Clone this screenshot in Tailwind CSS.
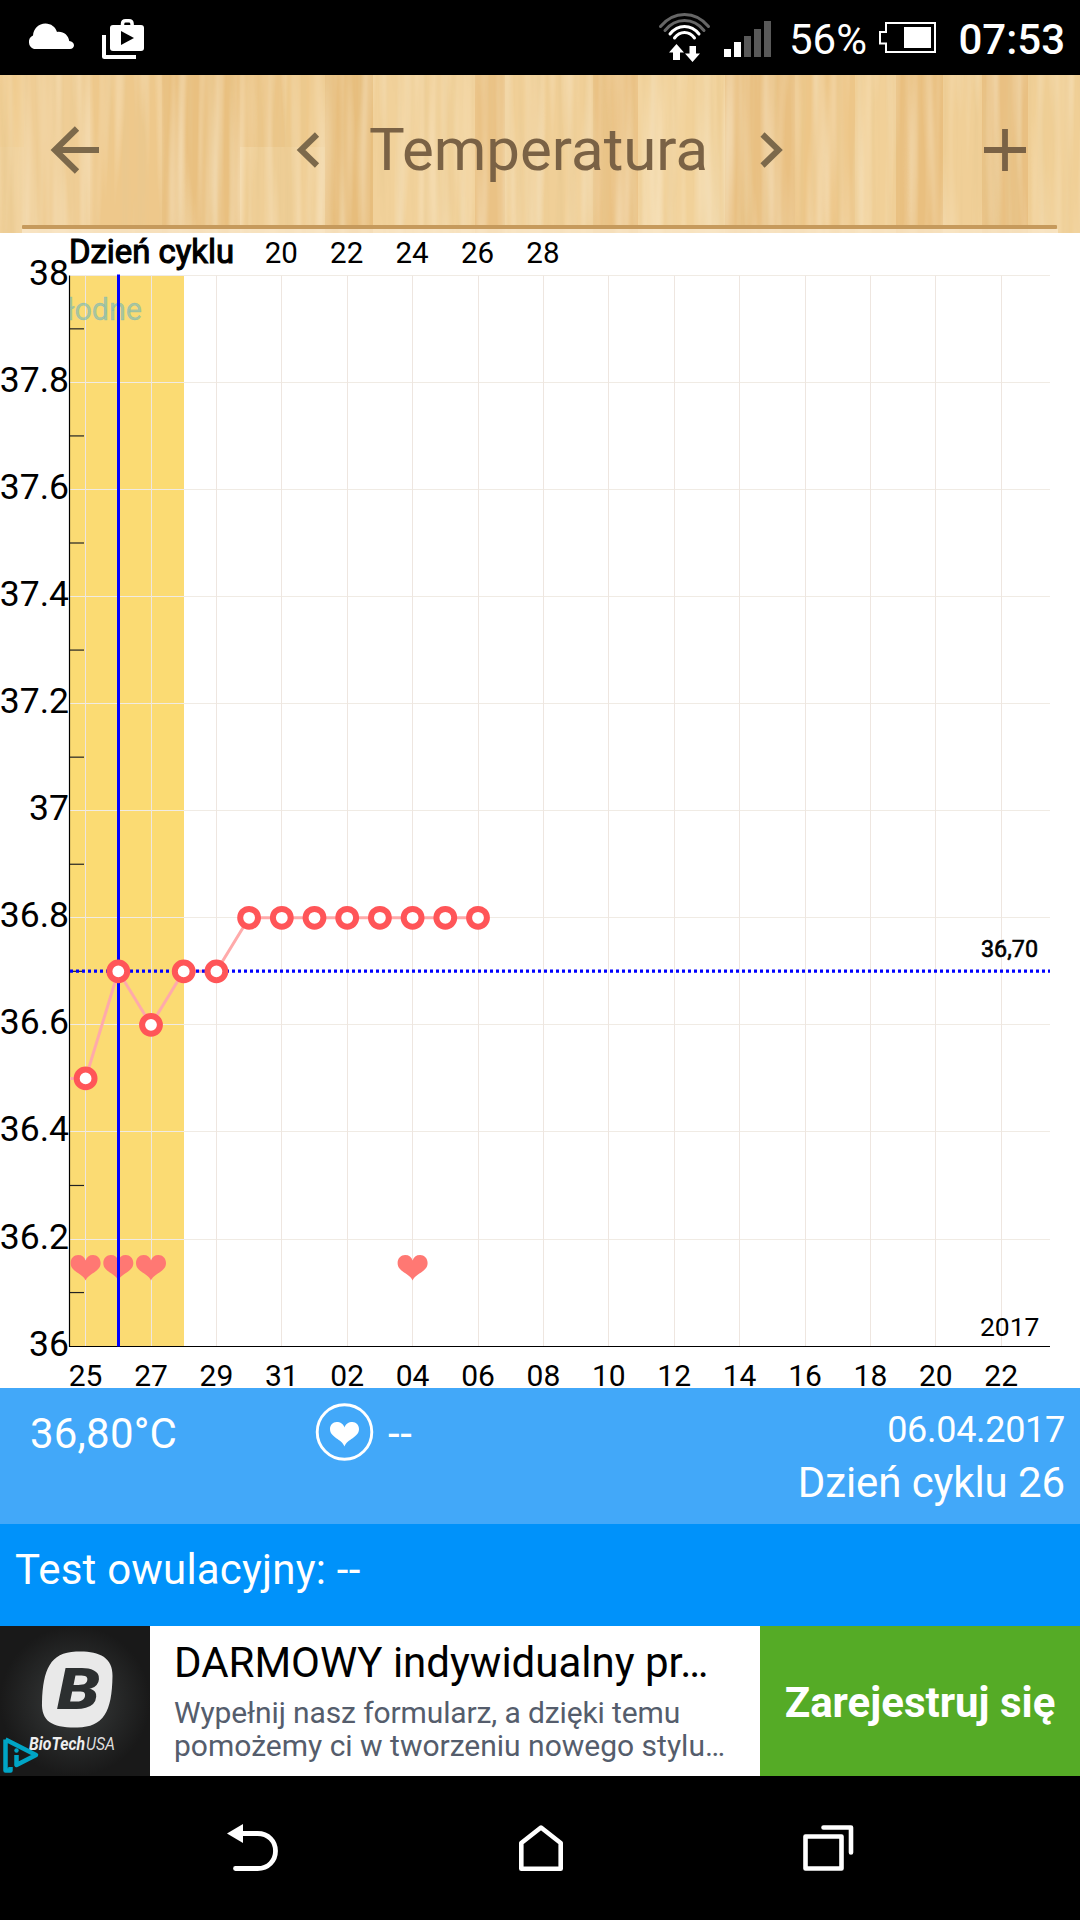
<!DOCTYPE html>
<html lang="pl">
<head>
    <meta charset="UTF-8">
    <meta name="viewport" content="width=device-width, initial-scale=1.0">
    <title>Temperatura</title>
    <script src="https://cdn.jsdelivr.net/npm/@tailwindcss/browser@4"></script>
</head>
<body class="bg-black">
<div class="w-[1080px] h-[1920px] flex flex-col overflow-hidden bg-white font-['Roboto',sans-serif]">

    <!-- Status bar -->
    <div class="h-[75px] shrink-0 bg-black text-white flex items-center pl-[26px] pr-[15px]">
        <svg class="w-[49px] h-[75px]" viewBox="27 0 49 75" fill="#fff">
            <path d="M35 49a7.300 7.300 0 0 1-1-13.500C34.500 28.500 39.500 23.500 46.500 23.500c5.500 0 10 3.500 11.500 8.500 6-1 11.500 3 12.200 9 3 .5 4.800 2 4.800 4.200 0 2.300-1.800 3.800-4 3.800z"/>
        </svg>
        <svg class="w-[44px] h-[75px] ml-[26px]" viewBox="101 0 44 75">
            <path d="M104 35v21.500q0 .5.500.5H136" fill="none" stroke="#fff" stroke-width="4"/>
            <path d="M122.500 26v-2q0-3.200 3.200-3.200h3.200q3.200 0 3.200 3.200v2" fill="none" stroke="#fff" stroke-width="3.500"/>
            <rect x="110" y="25" width="34" height="26" rx="3" fill="#fff"/>
            <path d="M121 31v14l13-7z"/>
        </svg>
        <svg class="w-[54px] h-[75px] ml-[513px]" viewBox="658 0 54 75" fill="none" stroke-width="3" stroke-linecap="round">
            <path d="M660.500 26.500q10-12 24-12t24 12M665 30.500q8-10 19.500-10t19.500 10" stroke="#666"/>
            <path d="M670 34q6-7.500 14.500-7.500t14.500 7.500M674.500 38q4-5.500 10-5.500t10 5.500" stroke="#fff"/>
            <path d="M676.500 44l7.500 8.500h-4V60h-7v-7.500h-4zM692.500 62l7.500-8.500h-4V46h-6.500v7.500H685z" fill="#fff"/>
        </svg>
        <svg class="w-[48px] h-[75px] ml-[12px]" viewBox="724 0 48 75">
            <path d="M724 49h7v8h-7zM734 42h7v15h-7z" fill="#fff"/>
            <path d="M744 36h7v21h-7zM754 29h7v28h-7zM764 21h7v36h-7z" fill="#595959"/>
        </svg>
        <span class="ml-[17px] w-[79px] text-[42px] leading-none pt-1 whitespace-nowrap">56%</span>
        <svg class="w-[58px] h-[75px] ml-[11px]" viewBox="879 0 58 75">
            <path d="M886 23h49v29h-49v-8.500h-6V32h6z" fill="none" stroke="#fff" stroke-width="2"/>
            <path d="M904 27h27v21h-27z" fill="#fff"/>
        </svg>
        <span class="ml-auto text-[42px] leading-none font-medium pt-1">07:53</span>
    </div>

    <!-- Wooden title bar -->
    <div class="h-[158px] shrink-0 relative">
        <svg class="absolute inset-0" width="1080" height="158" viewBox="0 0 1080 158">
            <defs>
                <filter id="grain" x="0" y="0" width="100%" height="100%">
                    <feTurbulence type="fractalNoise" baseFrequency="0.14 0.004" numOctaves="3" seed="8"/>
                    <feColorMatrix values="0 0 0 0 .80  0 0 0 0 .58  0 0 0 0 .28  1.200 0 0 0 -.5"/>
                </filter>
                <filter id="light" x="0" y="0" width="100%" height="100%">
                    <feTurbulence type="fractalNoise" baseFrequency="0.08 0.004" numOctaves="2" seed="21"/>
                    <feColorMatrix values="0 0 0 0 .96  0 0 0 0 .85  0 0 0 0 .66  0 1.100 0 0 -.45"/>
                </filter>
            </defs>
            <rect width="1080" height="158" fill="#f0cf97"/>
            <g id="planks"></g>
            <rect width="1080" height="158" filter="url(#grain)"/>
            <rect width="1080" height="158" filter="url(#light)"/>
            <rect x="22" y="154" width="1036" height="4" fill="#fae8cc" opacity=".75"/>
            <rect x="22" y="150" width="1035" height="4" rx="1" fill="#c69a5c"/>
        </svg>
        <div class="relative h-[150px] flex items-center text-[#7a6245]">
            <svg class="w-[50px] h-[50px] ml-[50px]" viewBox="50 125 50 50" fill="none" stroke="#7c694b" stroke-width="6.200">
                <path d="M99 150H55M77 128.500L55 150l22 21.500"/>
            </svg>
            <svg class="w-[24px] h-[40px] ml-[196px]" viewBox="296 130 24 40" fill="none" stroke="#7c694b" stroke-width="6">
                <path d="M317 134.500L301 150l16 15.500"/>
            </svg>
            <h1 class="ml-[49px] w-[339px] text-[60px] leading-none whitespace-nowrap">Temperatura</h1>
            <svg class="w-[24px] h-[40px] ml-[52px]" viewBox="760 130 24 40" fill="none" stroke="#7c694b" stroke-width="6">
                <path d="M762.500 134.500L778.500 150l-16 15.500"/>
            </svg>
            <svg class="w-[44px] h-[44px] ml-auto mr-[53px]" viewBox="983 128 44 44" stroke="#7a6245" stroke-width="5.800">
                <path d="M984 150h42M1005 129v42"/>
            </svg>
        </div>
    </div>

    <!-- Temperature chart, drawn by the script below -->
    <svg id="chart" class="block shrink-0 overflow-visible" width="1080" height="1155" viewBox="0 233 1080 1155">
        <defs>
            <clipPath id="plot"><rect x="70" y="275" width="980" height="1072"/></clipPath>
        </defs>
    </svg>

    <!-- Selected day -->
    <div class="h-[136px] shrink-0 bg-[#42a8f9] text-white flex pl-[30px] pr-[15px]">
        <div class="w-[285px] pt-[21px] text-[42px] leading-[50px] tracking-[0.2px]">36,80°C</div>
        <svg class="w-[60px] h-[60px] mt-[14px]" viewBox="0 0 60 60">
            <circle cx="29.500" cy="30" r="27.300" fill="none" stroke="#fff" stroke-width="2.900"/>
            <path d="M29.500 44.500C27 37 15 35.500 15 27c0-4 3-7 6.500-7 4 0 7 2 8 5.500 1-3.500 4-5.500 8-5.500 3.500 0 6.500 3 6.500 7 0 8.500-12 10-14.500 17.500z" fill="#fff"/>
        </svg>
        <div class="ml-[13px] pt-[21px] text-[42px] leading-[50px] tracking-[0.6px]">--</div>
        <div class="ml-auto text-right">
            <div class="pt-[18px] text-[36px] leading-[48px] tracking-[-0.3px]">06.04.2017</div>
            <div class="text-[42px] leading-[58px] tracking-[-0.1px]">Dzień cyklu 26</div>
        </div>
    </div>

    <div class="h-[102px] shrink-0 bg-[#0092fa] text-white flex items-center pl-[15px] pb-[11px] text-[42px] tracking-[0.2px]">Test owulacyjny: --</div>

    <!-- Ad banner -->
    <div class="h-[150px] shrink-0 flex">
        <svg class="shrink-0" width="150" height="150" viewBox="0 0 150 150">
            <defs>
                <radialGradient id="slate"><stop offset="0" stop-color="#3a3d3d"/><stop offset="1" stop-color="#191919"/></radialGradient>
            </defs>
            <rect width="150" height="150" fill="url(#slate)"/>
            <path d="M76 25.500C97 24.500 113 30 112.500 50c-.5 36-9 51-35 51.500C53 102 41 96 42 76c1-32 8-49.500 34-50.500z" fill="#e9e9e9"/>
            <text x="57" y="83" font-size="57" font-weight="900" font-style="italic" textLength="43" lengthAdjust="spacingAndGlyphs" fill="#2c2f30">B</text>
            <text x="29" y="124" font-size="17.500" font-weight="700" font-style="italic" textLength="56" lengthAdjust="spacingAndGlyphs" fill="#eee">BioTech</text>
            <text x="86" y="124" font-size="17.500" font-style="italic" textLength="29" lengthAdjust="spacingAndGlyphs" fill="#ddd">USA</text>
            <path d="M5.500 113.500v31h5v-3.500M5.500 113.500L36 129l-19.500 10v-10" fill="none" stroke="#00a5c6" stroke-width="4.500" stroke-linejoin="round"/>
            <circle cx="16.500" cy="124.500" r="2.200" fill="#00a5c6"/>
        </svg>
        <div class="w-[610px] bg-white pl-[24px] pt-[12px] whitespace-nowrap">
            <div class="text-[42px] leading-[50px] text-black">DARMOWY indywidualny pr…</div>
            <div class="text-[30px] leading-[33px] mt-[8px] text-[#555d6c]"><span class="tracking-[-0.12px]">Wypełnij nasz formularz, a dzięki temu</span><br>pomożemy ci w tworzeniu nowego stylu…</div>
        </div>
        <div class="grow bg-[#55ab26] text-white flex items-center justify-center text-[42px] font-bold whitespace-nowrap pt-[3px]">Zarejestruj się</div>
    </div>

    <!-- Navigation bar -->
    <div class="grow bg-black flex items-center justify-between pl-[226px] pr-[225px]">
        <svg class="w-[54px] h-[52px]" viewBox="226 1822 54 52" fill="none" stroke="#fff" stroke-width="4.800" stroke-linecap="round">
            <path d="M242 1833.500h15.500c11 0 18 8 18 17.500s-7 17.500-18 17.500H235.500"/>
            <path d="M243 1824v19l-16-9.500z" fill="#fff" stroke="none"/>
        </svg>
        <svg class="w-[48px] h-[52px]" viewBox="516 1822 48 52" fill="none" stroke="#fff" stroke-width="4.600" stroke-linejoin="round">
            <path d="M540 1827.500l19.700 15.500v25.700h-39.400V1843z"/>
        </svg>
        <svg class="w-[54px] h-[52px]" viewBox="801 1822 54 52" fill="none" stroke="#fff" stroke-width="4.600" stroke-linejoin="round" stroke-linecap="round">
            <path d="M805.500 1836.500h36v32h-36zM823.500 1827.500h27.500v25"/>
        </svg>
    </div>
</div>

<script>
    // --- Planks of the title bar: x, y, width, height, colour ---
    const planks = [
        [0, 0, 24, 72, '#f0cc90'], [24, 0, 66, 158, '#efcd95'], [90, 0, 72, 158, '#eec88b'],
        [162, 0, 78, 158, '#e9c080'], [240, 0, 45, 72, '#ecc587'], [285, 0, 40, 72, '#eec98c'],
        [325, 0, 48, 158, '#e7bd7c'], [373, 0, 102, 158, '#f1d19a'], [475, 0, 30, 158, '#eac285'],
        [593, 0, 45, 158, '#eac183'], [638, 0, 87, 158, '#f1d199'], [725, 0, 70, 158, '#e9c082'],
        [795, 0, 60, 158, '#edc688'], [855, 0, 41, 158, '#f1d098'], [896, 0, 47, 158, '#e9bf7f'],
        [943, 0, 39, 158, '#f0cf97'], [982, 0, 46, 158, '#e9c082'], [1028, 0, 52, 158, '#f0cf96']
    ];

    // --- Readings: day offset from 25.03 and temperature ---
    const readings = [
        [0, 36.5], [1, 36.7], [2, 36.6], [3, 36.7], [4, 36.7], [5, 36.8], [6, 36.8],
        [7, 36.8], [8, 36.8], [9, 36.8], [10, 36.8], [11, 36.8], [12, 36.8]
    ];
    const hearts = [0, 1, 2, 10];
    const dates = ['25', '27', '29', '31', '02', '04', '06', '08', '10', '12', '14', '16', '18', '20', '22'];
    const cycleDays = ['20', '22', '24', '26', '28'];

    const LEFT = 69.5, RIGHT = 1050, TOP = 275.5, BOTTOM = 1346.5;
    const x = day => 85.6 + day * 32.7;
    const y = temp => BOTTOM - 0.4 - (temp - 36) * 535.4;
    const crisp = v => Math.floor(v) + 0.5;

    const line = (x1, y1, x2, y2, color, width = 1, extra = '') =>
        `<line x1="${x1}" y1="${y1}" x2="${x2}" y2="${y2}" stroke="${color}" stroke-width="${width}" ${extra}/>`;
    const text = (tx, ty, size, anchor, value, extra = '') =>
        `<text x="${tx}" y="${ty}" font-size="${size}" text-anchor="${anchor}" ${extra}>${value}</text>`;

    function renderPlanks() {
        document.getElementById('planks').innerHTML = planks
            .map(([px, py, w, h, c]) => `<rect x="${px}" y="${py}" width="${w}" height="${h}" fill="${c}"/>`)
            .join('');
    }

    function renderChart() {
        let out = `<rect x="70" y="276" width="114" height="1070" fill="#fbdb73"/>`;

        // Grid and labels
        for (let t = 0; t <= 10; t++) {
            const gy = crisp(y(36 + t * 0.2));
            if (t > 0) out += line(70, gy, RIGHT, gy, '#f0ebe4');
            out += text(69, gy + 9.8, 35.5, 'end', +(36 + t * 0.2).toFixed(1));
        }
        dates.forEach((d, i) => {
            const gx = crisp(x(i * 2));
            out += line(gx, TOP, gx, BOTTOM, '#eee6e0');
            out += text(x(i * 2), 1386, 30, 'middle', d);
        });
        cycleDays.forEach((d, i) => {
            out += text(x(6 + i * 2) - 0.5, 262.5, 29.5, 'middle', d);
        });
        out += text(69, 262.5, 33, 'start', 'Dzień cyklu', 'stroke="#000" stroke-width="1.1" textLength="165" lengthAdjust="spacingAndGlyphs"');

        // Axes with minor ticks
        for (let t = 1; t < 20; t += 2) {
            out += line(70, y(36 + t / 10), 84, y(36 + t / 10), '#222', 1.2);
        }
        out += line(LEFT, TOP, LEFT, BOTTOM + 0.5, '#000', 1.2) + line(LEFT, BOTTOM, RIGHT, BOTTOM, '#000', 1.2);

        // Hearts
        hearts.forEach(d => {
            out += `<path transform="translate(${x(d)} 1255)" fill="#ff7873" d="M0 25.500C-3 18-15 17-15 8c0-5 3.500-8 7.500-8C-3.500 0-1 2 0 5.500 1 2 3.500 0 7.500 0 11.500 0 15 3 15 8 15 17 3 18 0 25.500z"/>`;
        });

        out += `<g clip-path="url(#plot)">${text(142, 320, 30.5, 'end', 'łodne', 'fill="#58b0c8" fill-opacity=".52" stroke="#58b0c8" stroke-width=".4" stroke-opacity=".5"')}</g>`;
        out += line(118.5, TOP - 1, 118.5, BOTTOM, '#0000ff', 3);

        // Temperature curve
        const points = readings.map(([d, t]) => `${x(d)},${y(t)}`).join(' ');
        out += `<polyline points="70,${y(36.5)} ${points}" fill="none" stroke="#ffaaaa" stroke-width="3"/>`;
        out += line(70, 971.1, RIGHT, 971.1, '#0000ff', 3.2, 'stroke-dasharray="3 3"');
        readings.forEach(([d, t]) => {
            out += `<circle cx="${x(d)}" cy="${y(t)}" r="8.900" fill="#fff" stroke="#ff5558" stroke-width="6"/>`;
        });

        out += text(1038, 957, 24, 'end', '36,70', 'stroke="#000" stroke-width=".6" textLength="57" lengthAdjust="spacingAndGlyphs"');
        out += text(1039.5, 1336, 26.5, 'end', '2017');
        document.getElementById('chart').insertAdjacentHTML('beforeend', out);
    }

    renderPlanks();
    renderChart();
</script>
</body>
</html>
